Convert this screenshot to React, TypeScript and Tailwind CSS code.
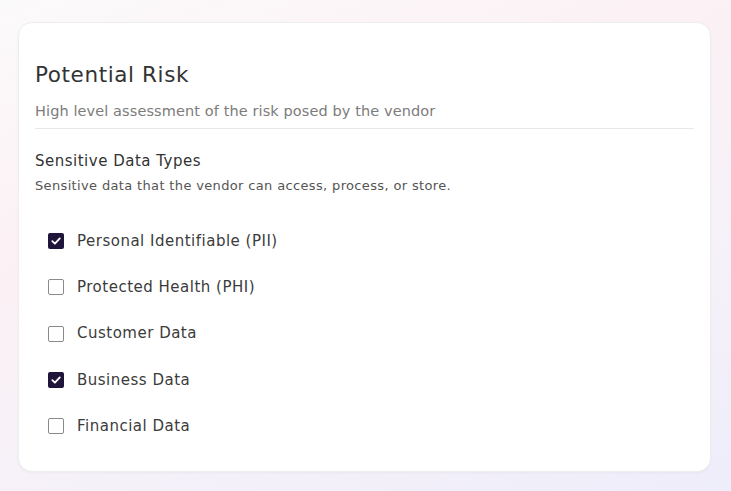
import { useState } from "react";

type Item = { id: string; label: string };

const items: Item[] = [
  { id: "pii", label: "Personal Identifiable (PII)" },
  { id: "phi", label: "Protected Health (PHI)" },
  { id: "customer", label: "Customer Data" },
  { id: "business", label: "Business Data" },
  { id: "financial", label: "Financial Data" },
];

function Check({ checked }: { checked: boolean }) {
  if (checked) {
    return (
      <span className="flex h-[16px] w-[16px] shrink-0 items-center justify-center rounded-[2px] bg-[#1f1439]">
        <svg viewBox="0 0 12 12" className="h-[12px] w-[12px]" fill="none">
          <path d="M2.3 6.2 4.9 8.7 9.8 3.4" stroke="#fff" strokeWidth="1.8" strokeLinecap="round" strokeLinejoin="round" />
        </svg>
      </span>
    );
  }
  return <span className="h-[16px] w-[16px] shrink-0 rounded-[2px] border-[1.5px] border-[#8a8a8a] bg-white" />;
}

export default function App() {
  const [selected, setSelected] = useState<Record<string, boolean>>({ pii: true, business: true });

  return (
    <div className="h-[491px] w-[731px] overflow-hidden bg-[linear-gradient(160deg,#fbfafb_0%,#fcf1f5_35%,#f7f2f8_60%,#eeedfa_100%)] px-[18px] pt-[22px] font-['DejaVu_Sans',sans-serif]">
      <div className="h-[450px] w-[693px] rounded-[14px] border border-[#eeeef0] bg-white px-[16px] pt-[38px] shadow-[0_1px_3px_rgba(0,0,0,0.04)]">
        <h1 className="text-[21.5px] leading-[28px] tracking-[0.6px] text-[#333]">Potential Risk</h1>
        <p className="mt-[13px] text-[14.5px] leading-[18px] tracking-[0.1px] text-[#7c7c7c]">High level assessment of the risk posed by the vendor</p>
        <div className="mt-[8px] h-px bg-[#e8e8ea]" />
        <h2 className="mt-[22px] text-[15px] leading-[20px] tracking-[0.5px] text-[#333]">Sensitive Data Types</h2>
        <p className="mt-[7px] text-[13px] leading-[16px] tracking-[0.35px] text-[#555]">Sensitive data that the vendor can access, process, or store.</p>
        <ul className="mt-[37px] flex flex-col gap-[26.3px] pl-[13px]">
          {items.map((it) => (
            <li key={it.id}>
              <button
                type="button"
                onClick={() => setSelected((s) => ({ ...s, [it.id]: !s[it.id] }))}
                className="flex h-[20px] items-center gap-[13px] text-[15px] tracking-[0.5px] text-[#3b3b3b]"
              >
                <Check checked={!!selected[it.id]} />
                {it.label}
              </button>
            </li>
          ))}
        </ul>
      </div>
    </div>
  );
}
